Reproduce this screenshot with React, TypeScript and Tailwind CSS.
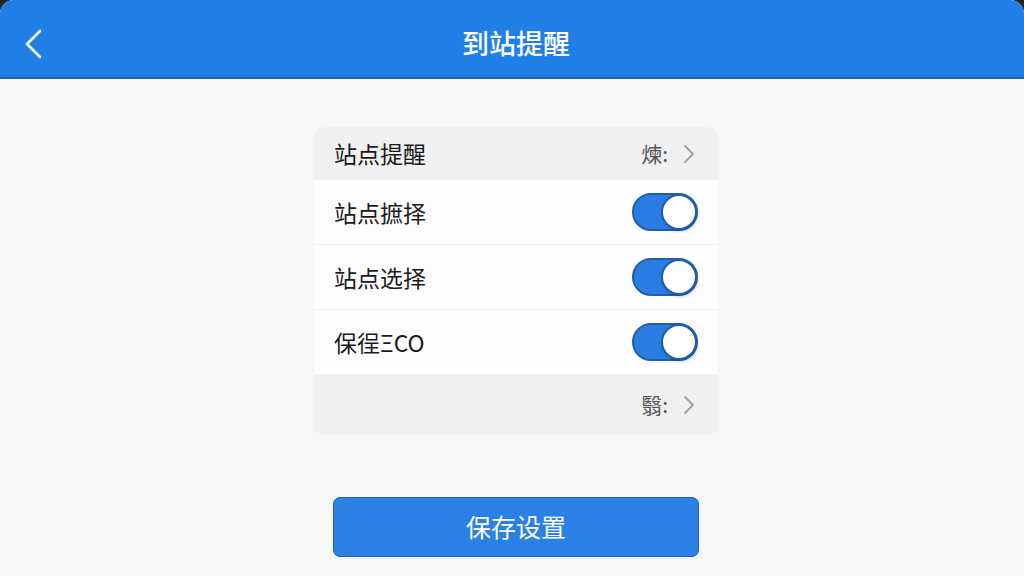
import React, { useState } from 'react';

const font = { fontFamily: '"Noto Sans CJK SC", "Noto Sans", sans-serif' };

const Chevron: React.FC = () => (
  <svg className="h-[22px] w-[14px] text-gray-400" fill="none" stroke="currentColor" viewBox="0 0 14 22">
    <path strokeLinecap="round" strokeLinejoin="round" strokeWidth={1.8} d="M3 3l8 8-8 8" />
  </svg>
);

const Toggle: React.FC<{ on: boolean; onChange: () => void }> = ({ on, onChange }) => (
  <button
    type="button"
    onClick={onChange}
    className={`relative h-[38px] w-[66px] rounded-full border-2 ${on ? 'border-[#1f5fa9] bg-[#2a7de2]' : 'border-gray-300 bg-gray-200'}`}
  >
    <span
      className={`absolute top-[-1px] h-[36px] w-[36px] rounded-full border-2 border-[#1f5fa9] bg-white shadow-[1px_2px_3px_rgba(0,0,0,0.15)] ${on ? 'right-[-1px]' : 'left-[-1px]'}`}
    ></span>
  </button>
);

const App: React.FC = () => {
  const [toggles, setToggles] = useState([true, true, true]);
  const flip = (i: number) => setToggles(t => t.map((v, j) => (j === i ? !v : v)));
  const labels = ['站点摭择', '站点选择', '保徎ΞCO'];

  return (
    <div className="h-[576px] w-[1024px] bg-[#1c2530]" style={font}>
      <div className="flex h-full flex-col overflow-hidden rounded-t-[14px] bg-[#f7f7f7]">
        {/* Header */}
        <div className="relative flex h-[79px] shrink-0 items-center justify-center border-b-2 border-[#1b62b8] bg-[#2180e8]">
          <button type="button" className="absolute left-[22px] top-[27px]">
            <svg className="h-[34px] w-[22px] text-white" fill="none" stroke="currentColor" viewBox="0 0 22 34">
              <path strokeLinecap="round" strokeLinejoin="round" strokeWidth={2.6} d="M18 4L5 17l13 13" />
            </svg>
          </button>
          <h1 className="pl-[8px] pt-[10px] text-[27px] font-medium text-white">到站提醒</h1>
        </div>

        {/* Card */}
        <div className="flex flex-1 flex-col items-center pl-[8px]">
          <div className="mt-[48px] w-[404px] overflow-hidden rounded-[10px] bg-white">
            <div className="flex h-[53px] items-center justify-between bg-[#f0f0f0] pl-[20px] pr-[22px]">
              <span className="text-[23px] text-[#1a1a1a]">站点提醒</span>
              <div className="flex items-center gap-[14px]">
                <span className="text-[21px] text-[#555]">煉:</span>
                <Chevron />
              </div>
            </div>
            {labels.map((label, i) => (
              <div
                key={label}
                className="flex h-[65px] items-center justify-between border-b border-[#f0f0f0] bg-[#fdfdfd] pl-[20px] pr-[20px]"
              >
                <span className="text-[23px] text-[#1a1a1a]">{label}</span>
                <Toggle on={toggles[i]} onChange={() => flip(i)} />
              </div>
            ))}
            <div className="flex h-[60px] items-center justify-end bg-[#f0f0f0] pr-[22px]">
              <div className="flex items-center gap-[14px]">
                <span className="text-[21px] text-[#555]">翳:</span>
                <Chevron />
              </div>
            </div>
          </div>

          <button
            type="button"
            className="mt-[62px] flex h-[60px] w-[366px] items-center justify-center rounded-[7px] border border-[#1b62b8] bg-[#2a80e4] text-[25px] text-white"
          >
            保存设置
          </button>
        </div>
      </div>
    </div>
  );
};

export default App;
